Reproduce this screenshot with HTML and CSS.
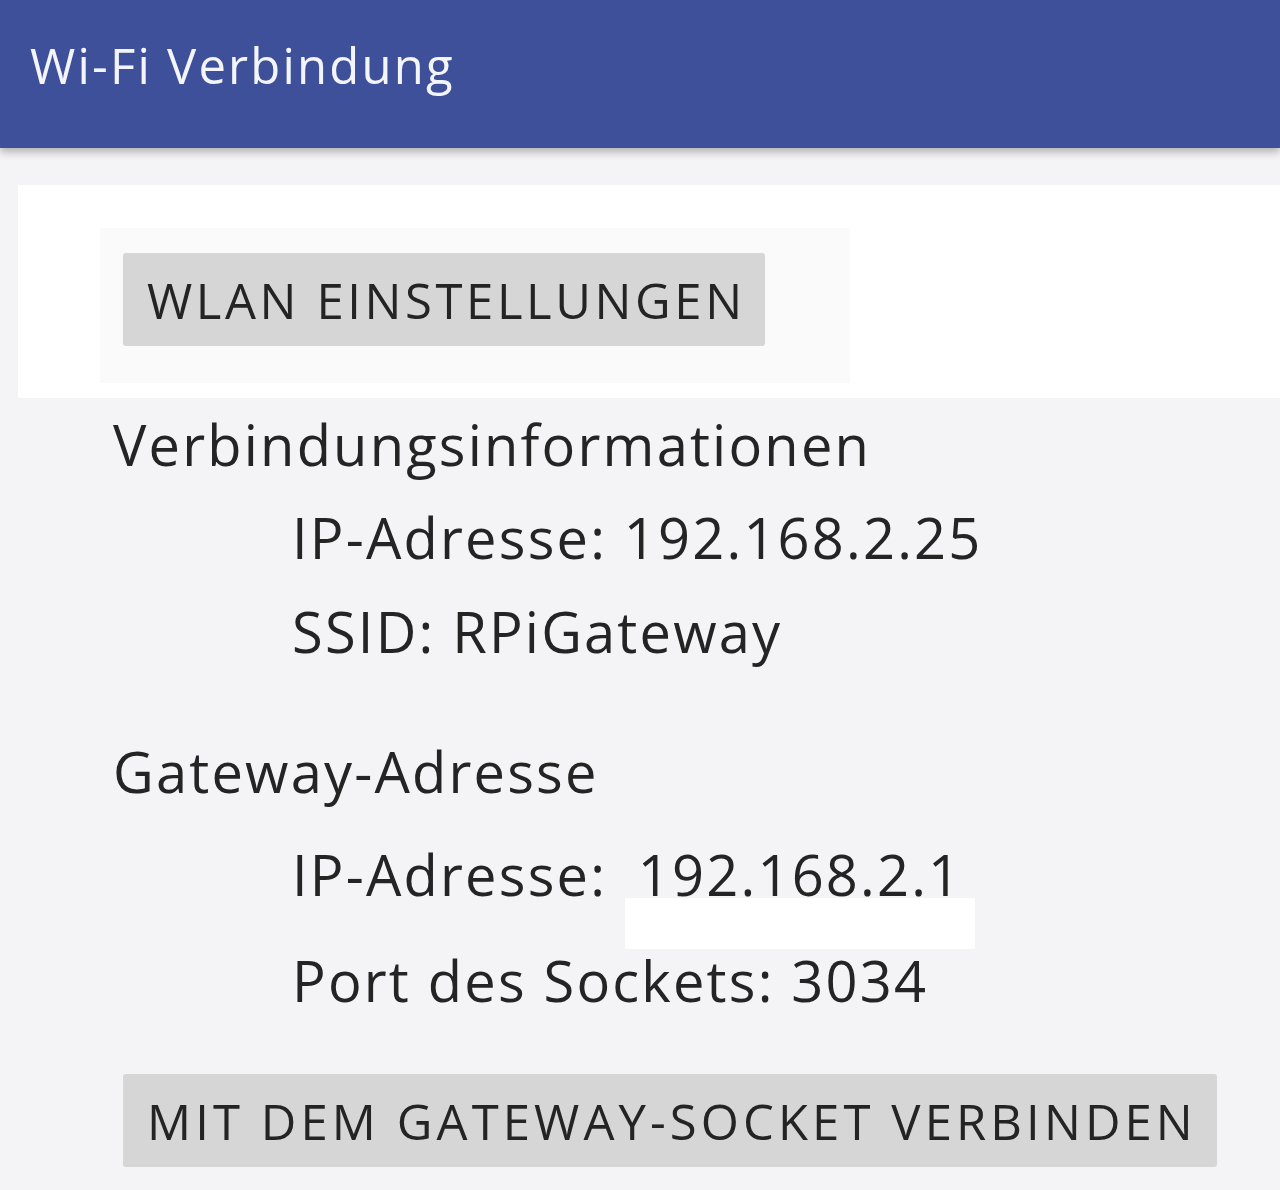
FILE: index.html
```html
<!DOCTYPE html>
<html lang="de">
<head>
	<meta charset="UTF-8">
	<meta name="viewport" content="width=device-width, initial-scale=1.0">
	<title>Wi-Fi Verbindung</title>

	<link rel="stylesheet" href="styles.css">
</head>
<body>
	<header class="toolbar">
		<h1 class="toolbar-title">Wi-Fi Verbindung</h1>
	</header>

	<main class="content">
		<div class="panel">
			<div class="panel-inner">
				<button class="btn btn-settings">WLAN Einstellungen</button>
			</div>
		</div>

		<section class="info">
			<h2 class="info-title">Verbindungsinformationen</h2>
			<p class="info-row row-ip">IP-Adresse: 192.168.2.25</p>
			<p class="info-row row-ssid">SSID: RPiGateway</p>
		</section>

		<section class="info info-gateway">
			<h2 class="info-title">Gateway-Adresse</h2>
			<p class="info-row row-gw-ip">IP-Adresse: <span class="gw-value">192.168.2.1</span></p>
			<div class="blank-field"></div>
			<p class="info-row row-port">Port des Sockets: 3034</p>
		</section>

		<div class="actions">
			<button class="btn btn-connect">Mit dem Gateway-Socket verbinden</button>
		</div>
	</main>
</body>
</html>
```

FILE: styles.css
```css
*,
*::before,
*::after {
	margin: 0;
	padding: 0;
	box-sizing: border-box;
}

:root {
	--primary: #3f509b;
	--bg-light: #f4f4f6;
	--text-dark: #242424;
	--button-grey: #d6d6d7;
}

html, body {
	width: 100%;
	overflow-x: hidden;
}

body {
	background: var(--bg-light);
	color: var(--text-dark);
	font-family: "Open Sans", "Noto Sans", sans-serif;
	min-height: 1190px;
}

/**
* Toolbar
*/
.toolbar {
	height: 148px;
	background: var(--primary);
	padding: 35px 0 0 30px;
	box-shadow: 0 4px 8px rgba(0, 0, 0, 0.28);
	position: relative;
	z-index: 1;
}

.toolbar-title {
	font-size: 49px;
	font-weight: 400;
	line-height: 60px;
	letter-spacing: 2.2px;
	color: #f4f5fb;
}

/* top panel with settings button */
.panel {
	margin: 37px 0 0 18px;
	height: 213px;
	background: #ffffff;
	padding: 43px 0 0 82px;
}

.panel-inner {
	width: 750px;
	height: 155px;
	background: #fafafb;
	padding: 25px 23px;
}

.btn {
	display: block;
	border: none;
	border-radius: 3px;
	background: var(--button-grey);
	color: var(--text-dark);
	font-family: "Open Sans", "Noto Sans", sans-serif;
	font-size: 49px;
	text-transform: uppercase;
	text-align: left;
	white-space: nowrap;
	height: 93px;
	padding: 0 24px;
}

.btn-settings {
	width: 642px;
	letter-spacing: 3.6px;
}

/* info blocks */
.info {
	padding-left: 113px;
}

.info-title {
	font-size: 56px;
	font-weight: 400;
	line-height: 60px;
	letter-spacing: 2.2px;
	margin-top: 16px;
}

.info-row {
	font-size: 56px;
	line-height: 60px;
	letter-spacing: 2.2px;
	padding-left: 179px;
}

.row-ip {
	margin-top: 33px;
}

.row-ssid {
	margin-top: 34px;
}

.info-gateway .info-title {
	margin-top: 80px;
}

.row-gw-ip {
	margin-top: 43px;
}

.gw-value {
	margin-left: 14px;
}

.blank-field {
	width: 350px;
	height: 51px;
	background: #ffffff;
	margin: -6px 0 0 512px;
}

.row-port {
	margin-top: 1px;
}

.actions {
	padding: 64px 0 0 123px;
}

.btn-connect {
	width: 1094px;
	letter-spacing: 4.1px;
}
```
